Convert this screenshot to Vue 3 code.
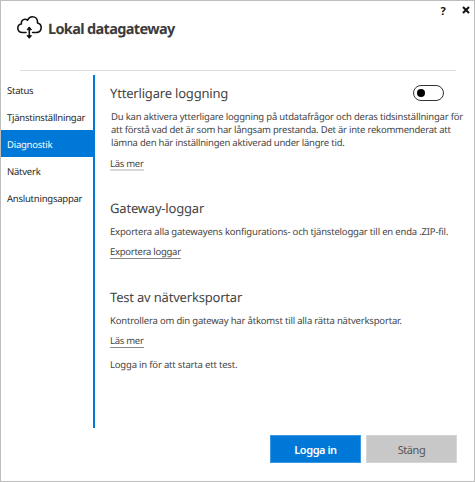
<script setup>
import { ref } from 'vue'

const items = ['Status', 'Tjänstinställningar', 'Diagnostik', 'Nätverk', 'Anslutningsappar']
const active = ref('Diagnostik')
const logging = ref(false)
</script>

<template>
  <div class="window">
    <header class="header">
      <svg class="logo" viewBox="0 0 27 25" width="27" height="25" fill="none" stroke="#111" stroke-width="1.6" stroke-linecap="round" stroke-linejoin="round">
        <path d="M10 17.500H6.400C3.600 17.500 1.800 15.800 1.800 13.300c0-2.300 1.500-4.100 3.600-4.300C5 6.200 6.700 4.200 8.900 4.200c1 0 1.900.3 2.600 1C12.500 3 14.300 1.700 16.400 1.700c3 0 5.100 2.200 5.100 5.100v1.200c2.200.5 3.700 2.300 3.700 4.600 0 2.800-2 4.900-4.700 4.900h-3.900" />
        <path d="M13.300 12.500v10" />
        <path d="M11.300 14.400l2-2.300 2 2.300zM11.300 20.900l2 2.300 2-2.300z" fill="#111" stroke-width="1" />
      </svg>
      <h1 class="title">Lokal datagateway</h1>
      <div class="controls">
        <button class="ctl help" aria-label="Hjälp">?</button>
        <button class="ctl" aria-label="Stäng">
          <svg viewBox="0 0 8 8" width="8" height="8" stroke="#111" stroke-width="2"><path d="M1 1l6 6M7 1L1 7" /></svg>
        </button>
      </div>
    </header>
    <div class="body">
      <nav class="nav">
        <a v-for="item in items" :key="item" class="nav-item" :class="{ active: item === active }" @click="active = item"><span>{{ item }}</span></a>
      </nav>
      <main class="content">
        <section class="section first">
          <div class="row">
            <h2>Ytterligare loggning</h2>
            <button class="toggle" :class="{ on: logging }" aria-label="Ytterligare loggning" @click="logging = !logging"><i class="knob"></i></button>
          </div>
          <p class="para">
            <span class="wide">Du kan aktivera ytterligare loggning på utdatafrågor och deras tidsinställningar för</span>
            <span>att förstå vad det är som har långsam prestanda. Det är inte rekommenderat att</span>
            <span>lämna den här inställningen aktiverad under längre tid.</span>
          </p>
          <a class="link pale">Läs mer</a>
        </section>
        <section class="section second">
          <h2>Gateway-loggar</h2>
          <p class="text">Exportera alla gatewayens konfigurations- och tjänsteloggar till en enda .ZIP-fil.</p>
          <a class="link">Exportera loggar</a>
        </section>
        <section class="section third">
          <h2>Test av nätverksportar</h2>
          <p class="text">Kontrollera om din gateway har åtkomst till alla rätta nätverksportar.</p>
          <a class="link">Läs mer</a>
          <p class="text note">Logga in för att starta ett test.</p>
        </section>
      </main>
    </div>
    <footer class="footer">
      <button class="btn primary">Logga in</button>
      <button class="btn">Stäng</button>
    </footer>
  </div>
</template>

<style>
body { background: #fff; }
</style>

<style scoped>
* { box-sizing: border-box; }
.window {
  width: 475px;
  height: 482px;
  border: 1px solid #bdbdbd;
  background: #fff;
  color: #444;
  font-family: "Noto Sans", "Open Sans", sans-serif;
  font-size: 9.5px;
  letter-spacing: -0.19px;
  text-rendering: geometricPrecision;
  display: flex;
  flex-direction: column;
  overflow: hidden;
}
h1, h2, p { margin: 0; white-space: nowrap; }
button { font-family: inherit; padding: 0; border: 0; background: none; }
.header {
  height: 70px;
  margin: 0 18px 0 19px;
  border-bottom: 1px solid #dedede;
  display: flex;
  align-items: flex-start;
  flex: none;
}
.logo { margin: 14px 0 0 -4px; flex: none; }
.title { margin: 17px 0 0 5px; font-size: 14.5px; line-height: 22px; font-weight: 700; color: #3b3b3b; letter-spacing: -0.65px; }
.controls { display: flex; gap: 13px; margin: 3px -15px 0 auto; align-items: center; height: 12px; }
.ctl { width: 10px; height: 12px; display: flex; align-items: center; justify-content: center; }
.help { font-size: 11px; font-weight: 700; color: #111; }
.body { display: flex; height: 353px; margin-top: 4px; flex: none; }
.nav { width: 94px; border-right: 2px solid #0078d7; padding-top: 1px; flex: none; letter-spacing: -0.24px; }
.nav-item { display: flex; align-items: center; height: 27px; padding: 1px 0 0 6px; color: #262626; white-space: nowrap; }
.nav-item.active { background: #0078d7; color: #fff; }
.content { flex: 1; padding: 8px 0 0 15px; }
.row { display: flex; align-items: center; justify-content: space-between; height: 20px; padding-right: 30px; }
h2 { font-size: 13px; line-height: 20px; font-weight: 400; color: #444; }
.toggle { width: 31px; height: 16px; border: 1px solid #333; border-radius: 8px; display: flex; align-items: center; padding: 0 3px; }
.toggle.on { justify-content: flex-end; }
.knob { width: 8px; height: 8px; border-radius: 50%; background: #000; }
.para { margin: 7px 0 0 1px; line-height: 13px; letter-spacing: -0.23px; }
.para span { display: block; width: max-content; }
.para .wide { letter-spacing: -0.21px; }
.text { line-height: 13px; }
.link { display: block; width: max-content; line-height: 12px; border-bottom: 1px solid #888; margin-top: 8px; letter-spacing: -0.28px; }
.link.pale { border-bottom: 2px solid #d8d8d8; margin-top: 9px; line-height: 11px; }
.second { margin-top: 27px; }
.second .text { margin-top: 7px; }
.third { margin-top: 28px; }
.third .text { margin-top: 7px; }
.third .note { margin-top: 10px; }
.footer { display: flex; gap: 5px; margin: 7px 17px 0 auto; }
.btn { width: 91px; height: 28px; background: #c8c8c8; border: 1px solid #d6d6d6; font-size: 11px; color: #555; letter-spacing: -0.45px; }
.btn.primary { background: #0078d7; border-color: #3a97e2; color: #fff; font-weight: 600; }
</style>
